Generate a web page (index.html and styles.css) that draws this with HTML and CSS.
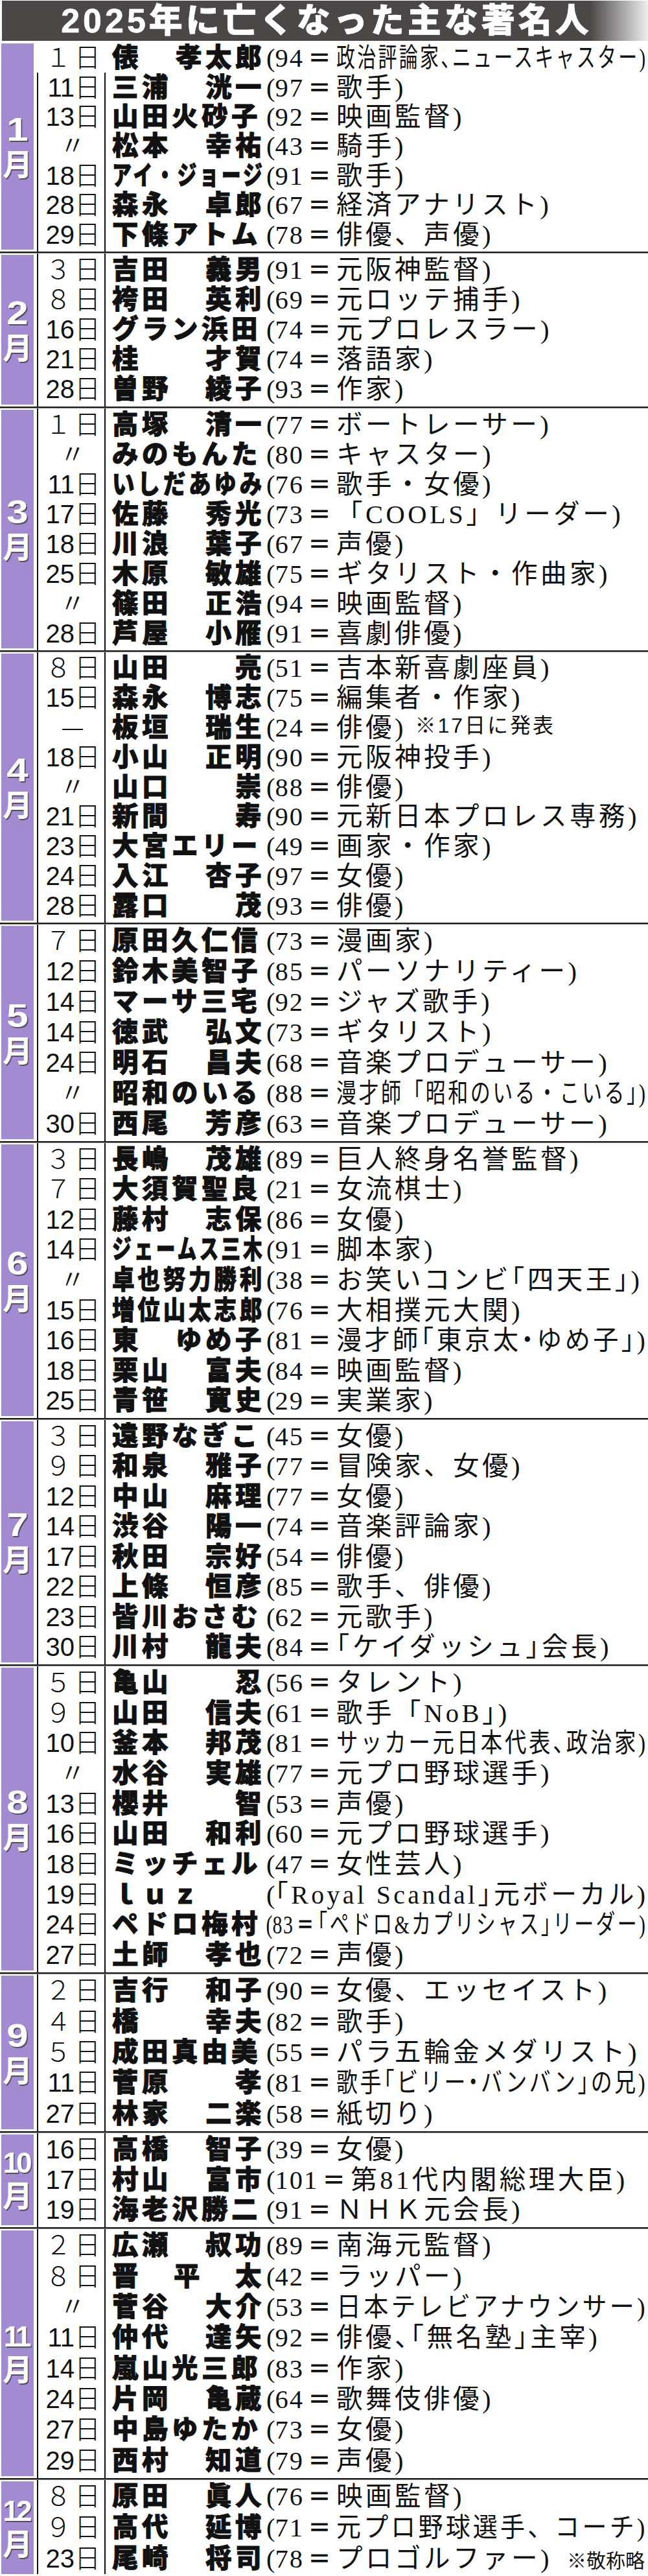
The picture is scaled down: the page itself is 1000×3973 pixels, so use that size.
FILE: index.html
```html
<!DOCTYPE html>
<html lang="ja">
<head>
<meta charset="utf-8">
<title>2025年に亡くなった主な著名人</title>
<link rel="stylesheet" href="styles.css">
<script src="script.js" defer></script>
</head>
<body>
<div class="title"><h1>2025年に亡くなった主な著名人</h1></div>
<div class="table">

<section class="sec m1">
  <div class="month"><span class="mn">1</span><span class="mg">月</span></div>
  <div class="rows">
    <div class="row first"><div class="date"><span class="dn fw">１</span>日</div><div class="name sp"><span>俵</span><span>孝太郎</span></div><div class="rest"><span class="pl">(</span><span class="age">94</span><span class="eq">＝</span><span class="desc fit halt">政治評論家、ニュースキャスター<span class="pr">)</span></span></div></div>
    <div class="row"><div class="date"><span class="dn">11</span>日</div><div class="name sp"><span>三浦</span><span>洸一</span></div><div class="rest"><span class="pl">(</span><span class="age">97</span><span class="eq">＝</span><span class="desc fit">歌手<span class="pr">)</span></span></div></div>
    <div class="row"><div class="date"><span class="dn">13</span>日</div><div class="name"><span class="nm">山田火砂子</span></div><div class="rest"><span class="pl">(</span><span class="age">92</span><span class="eq">＝</span><span class="desc fit">映画監督<span class="pr">)</span></span></div></div>
    <div class="row"><div class="date c"><span class="dit">〃</span></div><div class="name sp"><span>松本</span><span>幸祐</span></div><div class="rest"><span class="pl">(</span><span class="age">43</span><span class="eq">＝</span><span class="desc fit">騎手<span class="pr">)</span></span></div></div>
    <div class="row"><div class="date"><span class="dn">18</span>日</div><div class="name"><span class="nm">アイ・ジョージ</span></div><div class="rest"><span class="pl">(</span><span class="age">91</span><span class="eq">＝</span><span class="desc fit">歌手<span class="pr">)</span></span></div></div>
    <div class="row"><div class="date"><span class="dn">28</span>日</div><div class="name sp"><span>森永</span><span>卓郎</span></div><div class="rest"><span class="pl">(</span><span class="age">67</span><span class="eq">＝</span><span class="desc fit">経済アナリスト<span class="pr">)</span></span></div></div>
    <div class="row"><div class="date"><span class="dn">29</span>日</div><div class="name"><span class="nm">下條アトム</span></div><div class="rest"><span class="pl">(</span><span class="age">78</span><span class="eq">＝</span><span class="desc fit">俳優、声優<span class="pr">)</span></span></div></div>
  </div>
</section>
<div class="sep"></div>

<section class="sec m2">
  <div class="month"><span class="mn">2</span><span class="mg">月</span></div>
  <div class="rows">
    <div class="row"><div class="date"><span class="dn fw">３</span>日</div><div class="name sp"><span>吉田</span><span>義男</span></div><div class="rest"><span class="pl">(</span><span class="age">91</span><span class="eq">＝</span><span class="desc fit">元阪神監督<span class="pr">)</span></span></div></div>
    <div class="row"><div class="date"><span class="dn fw">８</span>日</div><div class="name sp"><span>袴田</span><span>英利</span></div><div class="rest"><span class="pl">(</span><span class="age">69</span><span class="eq">＝</span><span class="desc fit">元ロッテ捕手<span class="pr">)</span></span></div></div>
    <div class="row"><div class="date"><span class="dn">16</span>日</div><div class="name"><span class="nm">グラン浜田</span></div><div class="rest"><span class="pl">(</span><span class="age">74</span><span class="eq">＝</span><span class="desc fit">元プロレスラー<span class="pr">)</span></span></div></div>
    <div class="row"><div class="date"><span class="dn">21</span>日</div><div class="name sp"><span>桂</span><span>才賀</span></div><div class="rest"><span class="pl">(</span><span class="age">74</span><span class="eq">＝</span><span class="desc fit">落語家<span class="pr">)</span></span></div></div>
    <div class="row"><div class="date"><span class="dn">28</span>日</div><div class="name sp"><span>曽野</span><span>綾子</span></div><div class="rest"><span class="pl">(</span><span class="age">93</span><span class="eq">＝</span><span class="desc fit">作家<span class="pr">)</span></span></div></div>
  </div>
</section>
<div class="sep"></div>

<section class="sec m3">
  <div class="month"><span class="mn">3</span><span class="mg">月</span></div>
  <div class="rows">
    <div class="row"><div class="date"><span class="dn fw">１</span>日</div><div class="name sp"><span>高塚</span><span>清一</span></div><div class="rest"><span class="pl">(</span><span class="age">77</span><span class="eq">＝</span><span class="desc fit">ボートレーサー<span class="pr">)</span></span></div></div>
    <div class="row"><div class="date c"><span class="dit">〃</span></div><div class="name"><span class="nm">みのもんた</span></div><div class="rest"><span class="pl">(</span><span class="age">80</span><span class="eq">＝</span><span class="desc fit">キャスター<span class="pr">)</span></span></div></div>
    <div class="row"><div class="date"><span class="dn">11</span>日</div><div class="name"><span class="nm">いしだあゆみ</span></div><div class="rest"><span class="pl">(</span><span class="age">76</span><span class="eq">＝</span><span class="desc fit">歌手・女優<span class="pr">)</span></span></div></div>
    <div class="row"><div class="date"><span class="dn">17</span>日</div><div class="name sp"><span>佐藤</span><span>秀光</span></div><div class="rest"><span class="pl">(</span><span class="age">73</span><span class="eq">＝</span><span class="desc fit">「<span class="lt">COOLS</span>」リーダー<span class="pr">)</span></span></div></div>
    <div class="row"><div class="date"><span class="dn">18</span>日</div><div class="name sp"><span>川浪</span><span>葉子</span></div><div class="rest"><span class="pl">(</span><span class="age">67</span><span class="eq">＝</span><span class="desc fit">声優<span class="pr">)</span></span></div></div>
    <div class="row"><div class="date"><span class="dn">25</span>日</div><div class="name sp"><span>木原</span><span>敏雄</span></div><div class="rest"><span class="pl">(</span><span class="age">75</span><span class="eq">＝</span><span class="desc fit">ギタリスト・作曲家<span class="pr">)</span></span></div></div>
    <div class="row"><div class="date c"><span class="dit">〃</span></div><div class="name sp"><span>篠田</span><span>正浩</span></div><div class="rest"><span class="pl">(</span><span class="age">94</span><span class="eq">＝</span><span class="desc fit">映画監督<span class="pr">)</span></span></div></div>
    <div class="row"><div class="date"><span class="dn">28</span>日</div><div class="name sp"><span>芦屋</span><span>小雁</span></div><div class="rest"><span class="pl">(</span><span class="age">91</span><span class="eq">＝</span><span class="desc fit">喜劇俳優<span class="pr">)</span></span></div></div>
  </div>
</section>
<div class="sep"></div>

<section class="sec m4">
  <div class="month"><span class="mn">4</span><span class="mg">月</span></div>
  <div class="rows">
    <div class="row"><div class="date"><span class="dn fw">８</span>日</div><div class="name sp"><span>山田</span><span>亮</span></div><div class="rest"><span class="pl">(</span><span class="age">51</span><span class="eq">＝</span><span class="desc fit">吉本新喜劇座員<span class="pr">)</span></span></div></div>
    <div class="row"><div class="date"><span class="dn">15</span>日</div><div class="name sp"><span>森永</span><span>博志</span></div><div class="rest"><span class="pl">(</span><span class="age">75</span><span class="eq">＝</span><span class="desc fit">編集者・作家<span class="pr">)</span></span></div></div>
    <div class="row"><div class="date c"><span class="dash">―</span></div><div class="name sp"><span>板垣</span><span>瑞生</span></div><div class="rest"><span class="pl">(</span><span class="age">24</span><span class="eq">＝</span><span class="desc fit">俳優<span class="pr">)</span></span><span class="note">※17日に発表</span></div></div>
    <div class="row"><div class="date"><span class="dn">18</span>日</div><div class="name sp"><span>小山</span><span>正明</span></div><div class="rest"><span class="pl">(</span><span class="age">90</span><span class="eq">＝</span><span class="desc fit">元阪神投手<span class="pr">)</span></span></div></div>
    <div class="row"><div class="date c"><span class="dit">〃</span></div><div class="name sp"><span>山口</span><span>崇</span></div><div class="rest"><span class="pl">(</span><span class="age">88</span><span class="eq">＝</span><span class="desc fit">俳優<span class="pr">)</span></span></div></div>
    <div class="row"><div class="date"><span class="dn">21</span>日</div><div class="name sp"><span>新間</span><span>寿</span></div><div class="rest"><span class="pl">(</span><span class="age">90</span><span class="eq">＝</span><span class="desc fit">元新日本プロレス専務<span class="pr">)</span></span></div></div>
    <div class="row"><div class="date"><span class="dn">23</span>日</div><div class="name"><span class="nm">大宮エリー</span></div><div class="rest"><span class="pl">(</span><span class="age">49</span><span class="eq">＝</span><span class="desc fit">画家・作家<span class="pr">)</span></span></div></div>
    <div class="row"><div class="date"><span class="dn">24</span>日</div><div class="name sp"><span>入江</span><span>杏子</span></div><div class="rest"><span class="pl">(</span><span class="age">97</span><span class="eq">＝</span><span class="desc fit">女優<span class="pr">)</span></span></div></div>
    <div class="row"><div class="date"><span class="dn">28</span>日</div><div class="name sp"><span>露口</span><span>茂</span></div><div class="rest"><span class="pl">(</span><span class="age">93</span><span class="eq">＝</span><span class="desc fit">俳優<span class="pr">)</span></span></div></div>
  </div>
</section>
<div class="sep"></div>

<section class="sec m5">
  <div class="month"><span class="mn">5</span><span class="mg">月</span></div>
  <div class="rows">
    <div class="row"><div class="date"><span class="dn fw">７</span>日</div><div class="name"><span class="nm">原田久仁信</span></div><div class="rest"><span class="pl">(</span><span class="age">73</span><span class="eq">＝</span><span class="desc fit">漫画家<span class="pr">)</span></span></div></div>
    <div class="row"><div class="date"><span class="dn">12</span>日</div><div class="name"><span class="nm">鈴木美智子</span></div><div class="rest"><span class="pl">(</span><span class="age">85</span><span class="eq">＝</span><span class="desc fit">パーソナリティー<span class="pr">)</span></span></div></div>
    <div class="row"><div class="date"><span class="dn">14</span>日</div><div class="name"><span class="nm">マーサ三宅</span></div><div class="rest"><span class="pl">(</span><span class="age">92</span><span class="eq">＝</span><span class="desc fit">ジャズ歌手<span class="pr">)</span></span></div></div>
    <div class="row"><div class="date"><span class="dn">14</span>日</div><div class="name sp"><span>徳武</span><span>弘文</span></div><div class="rest"><span class="pl">(</span><span class="age">73</span><span class="eq">＝</span><span class="desc fit">ギタリスト<span class="pr">)</span></span></div></div>
    <div class="row"><div class="date"><span class="dn">24</span>日</div><div class="name sp"><span>明石</span><span>昌夫</span></div><div class="rest"><span class="pl">(</span><span class="age">68</span><span class="eq">＝</span><span class="desc fit">音楽プロデューサー<span class="pr">)</span></span></div></div>
    <div class="row"><div class="date c"><span class="dit">〃</span></div><div class="name"><span class="nm">昭和のいる</span></div><div class="rest"><span class="pl">(</span><span class="age">88</span><span class="eq">＝</span><span class="desc fit">漫才師「昭和のいる・こいる」<span class="pr">)</span></span></div></div>
    <div class="row"><div class="date"><span class="dn">30</span>日</div><div class="name sp"><span>西尾</span><span>芳彦</span></div><div class="rest"><span class="pl">(</span><span class="age">63</span><span class="eq">＝</span><span class="desc fit">音楽プロデューサー<span class="pr">)</span></span></div></div>
  </div>
</section>
<div class="sep"></div>

<section class="sec m6">
  <div class="month"><span class="mn">6</span><span class="mg">月</span></div>
  <div class="rows">
    <div class="row"><div class="date"><span class="dn fw">３</span>日</div><div class="name sp"><span>長嶋</span><span>茂雄</span></div><div class="rest"><span class="pl">(</span><span class="age">89</span><span class="eq">＝</span><span class="desc fit">巨人終身名誉監督<span class="pr">)</span></span></div></div>
    <div class="row"><div class="date"><span class="dn fw">７</span>日</div><div class="name"><span class="nm">大須賀聖良</span></div><div class="rest"><span class="pl">(</span><span class="age">21</span><span class="eq">＝</span><span class="desc fit">女流棋士<span class="pr">)</span></span></div></div>
    <div class="row"><div class="date"><span class="dn">12</span>日</div><div class="name sp"><span>藤村</span><span>志保</span></div><div class="rest"><span class="pl">(</span><span class="age">86</span><span class="eq">＝</span><span class="desc fit">女優<span class="pr">)</span></span></div></div>
    <div class="row"><div class="date"><span class="dn">14</span>日</div><div class="name"><span class="nm">ジェームス三木</span></div><div class="rest"><span class="pl">(</span><span class="age">91</span><span class="eq">＝</span><span class="desc fit">脚本家<span class="pr">)</span></span></div></div>
    <div class="row"><div class="date c"><span class="dit">〃</span></div><div class="name"><span class="nm">卓也努力勝利</span></div><div class="rest"><span class="pl">(</span><span class="age">38</span><span class="eq">＝</span><span class="desc fit halt">お笑いコンビ「四天王」<span class="pr">)</span></span></div></div>
    <div class="row"><div class="date"><span class="dn">15</span>日</div><div class="name"><span class="nm">増位山太志郎</span></div><div class="rest"><span class="pl">(</span><span class="age">76</span><span class="eq">＝</span><span class="desc fit">大相撲元大関<span class="pr">)</span></span></div></div>
    <div class="row"><div class="date"><span class="dn">16</span>日</div><div class="name sp"><span>東</span><span>ゆめ子</span></div><div class="rest"><span class="pl">(</span><span class="age">81</span><span class="eq">＝</span><span class="desc fit halt">漫才師「東京太・ゆめ子」<span class="pr">)</span></span></div></div>
    <div class="row"><div class="date"><span class="dn">18</span>日</div><div class="name sp"><span>栗山</span><span>富夫</span></div><div class="rest"><span class="pl">(</span><span class="age">84</span><span class="eq">＝</span><span class="desc fit">映画監督<span class="pr">)</span></span></div></div>
    <div class="row"><div class="date"><span class="dn">25</span>日</div><div class="name sp"><span>青笹</span><span>寛史</span></div><div class="rest"><span class="pl">(</span><span class="age">29</span><span class="eq">＝</span><span class="desc fit">実業家<span class="pr">)</span></span></div></div>
  </div>
</section>
<div class="sep"></div>

<section class="sec m7">
  <div class="month"><span class="mn">7</span><span class="mg">月</span></div>
  <div class="rows">
    <div class="row"><div class="date"><span class="dn fw">３</span>日</div><div class="name"><span class="nm">遠野なぎこ</span></div><div class="rest"><span class="pl">(</span><span class="age">45</span><span class="eq">＝</span><span class="desc fit">女優<span class="pr">)</span></span></div></div>
    <div class="row"><div class="date"><span class="dn fw">９</span>日</div><div class="name sp"><span>和泉</span><span>雅子</span></div><div class="rest"><span class="pl">(</span><span class="age">77</span><span class="eq">＝</span><span class="desc fit">冒険家、女優<span class="pr">)</span></span></div></div>
    <div class="row"><div class="date"><span class="dn">12</span>日</div><div class="name sp"><span>中山</span><span>麻理</span></div><div class="rest"><span class="pl">(</span><span class="age">77</span><span class="eq">＝</span><span class="desc fit">女優<span class="pr">)</span></span></div></div>
    <div class="row"><div class="date"><span class="dn">14</span>日</div><div class="name sp"><span>渋谷</span><span>陽一</span></div><div class="rest"><span class="pl">(</span><span class="age">74</span><span class="eq">＝</span><span class="desc fit">音楽評論家<span class="pr">)</span></span></div></div>
    <div class="row"><div class="date"><span class="dn">17</span>日</div><div class="name sp"><span>秋田</span><span>宗好</span></div><div class="rest"><span class="pl">(</span><span class="age">54</span><span class="eq">＝</span><span class="desc fit">俳優<span class="pr">)</span></span></div></div>
    <div class="row"><div class="date"><span class="dn">22</span>日</div><div class="name sp"><span>上條</span><span>恒彦</span></div><div class="rest"><span class="pl">(</span><span class="age">85</span><span class="eq">＝</span><span class="desc fit">歌手、俳優<span class="pr">)</span></span></div></div>
    <div class="row"><div class="date"><span class="dn">23</span>日</div><div class="name"><span class="nm">皆川おさむ</span></div><div class="rest"><span class="pl">(</span><span class="age">62</span><span class="eq">＝</span><span class="desc fit">元歌手<span class="pr">)</span></span></div></div>
    <div class="row"><div class="date"><span class="dn">30</span>日</div><div class="name sp"><span>川村</span><span>龍夫</span></div><div class="rest"><span class="pl">(</span><span class="age">84</span><span class="eq">＝</span><span class="desc fit halt">「ケイダッシュ」会長<span class="pr">)</span></span></div></div>
  </div>
</section>
<div class="sep"></div>

<section class="sec m8">
  <div class="month"><span class="mn">8</span><span class="mg">月</span></div>
  <div class="rows">
    <div class="row"><div class="date"><span class="dn fw">５</span>日</div><div class="name sp"><span>亀山</span><span>忍</span></div><div class="rest"><span class="pl">(</span><span class="age">56</span><span class="eq">＝</span><span class="desc fit">タレント<span class="pr">)</span></span></div></div>
    <div class="row"><div class="date"><span class="dn fw">９</span>日</div><div class="name sp"><span>山田</span><span>信夫</span></div><div class="rest"><span class="pl">(</span><span class="age">61</span><span class="eq">＝</span><span class="desc fit">歌手「<span class="lt">NoB</span>」<span class="pr">)</span></span></div></div>
    <div class="row"><div class="date"><span class="dn">10</span>日</div><div class="name sp"><span>釜本</span><span>邦茂</span></div><div class="rest"><span class="pl">(</span><span class="age">81</span><span class="eq">＝</span><span class="desc fit halt">サッカー元日本代表、政治家<span class="pr">)</span></span></div></div>
    <div class="row"><div class="date c"><span class="dit">〃</span></div><div class="name sp"><span>水谷</span><span>実雄</span></div><div class="rest"><span class="pl">(</span><span class="age">77</span><span class="eq">＝</span><span class="desc fit">元プロ野球選手<span class="pr">)</span></span></div></div>
    <div class="row"><div class="date"><span class="dn">13</span>日</div><div class="name sp"><span>櫻井</span><span>智</span></div><div class="rest"><span class="pl">(</span><span class="age">53</span><span class="eq">＝</span><span class="desc fit">声優<span class="pr">)</span></span></div></div>
    <div class="row"><div class="date"><span class="dn">16</span>日</div><div class="name sp"><span>山田</span><span>和利</span></div><div class="rest"><span class="pl">(</span><span class="age">60</span><span class="eq">＝</span><span class="desc fit">元プロ野球選手<span class="pr">)</span></span></div></div>
    <div class="row"><div class="date"><span class="dn">18</span>日</div><div class="name"><span class="nm">ミッチェル</span></div><div class="rest"><span class="pl">(</span><span class="age">47</span><span class="eq">＝</span><span class="desc fit">女性芸人<span class="pr">)</span></span></div></div>
    <div class="row"><div class="date"><span class="dn">19</span>日</div><div class="name"><span class="nm">ｌｕｚ</span></div><div class="rest"><span class="pl">(</span><span class="desc fit halt">「<span class="lt">Royal Scandal</span>」元ボーカル<span class="pr">)</span></span></div></div>
    <div class="row"><div class="date"><span class="dn">24</span>日</div><div class="name"><span class="nm">ペドロ梅村</span></div><div class="rest"><span class="grp fit"><span class="pl">(</span><span class="age">83</span><span class="eq">＝</span><span class="halt">「ペドロ&amp;カプリシャス」リーダー</span><span class="pr">)</span></span></div></div>
    <div class="row"><div class="date"><span class="dn">27</span>日</div><div class="name sp"><span>土師</span><span>孝也</span></div><div class="rest"><span class="pl">(</span><span class="age">72</span><span class="eq">＝</span><span class="desc fit">声優<span class="pr">)</span></span></div></div>
  </div>
</section>
<div class="sep"></div>

<section class="sec m9">
  <div class="month"><span class="mn">9</span><span class="mg">月</span></div>
  <div class="rows">
    <div class="row"><div class="date"><span class="dn fw">２</span>日</div><div class="name sp"><span>吉行</span><span>和子</span></div><div class="rest"><span class="pl">(</span><span class="age">90</span><span class="eq">＝</span><span class="desc fit">女優、エッセイスト<span class="pr">)</span></span></div></div>
    <div class="row"><div class="date"><span class="dn fw">４</span>日</div><div class="name sp"><span>橋</span><span>幸夫</span></div><div class="rest"><span class="pl">(</span><span class="age">82</span><span class="eq">＝</span><span class="desc fit">歌手<span class="pr">)</span></span></div></div>
    <div class="row"><div class="date"><span class="dn fw">５</span>日</div><div class="name"><span class="nm">成田真由美</span></div><div class="rest"><span class="pl">(</span><span class="age">55</span><span class="eq">＝</span><span class="desc fit">パラ五輪金メダリスト<span class="pr">)</span></span></div></div>
    <div class="row"><div class="date"><span class="dn">11</span>日</div><div class="name sp"><span>菅原</span><span>孝</span></div><div class="rest"><span class="pl">(</span><span class="age">81</span><span class="eq">＝</span><span class="desc fit halt">歌手「ビリー・バンバン」の兄<span class="pr">)</span></span></div></div>
    <div class="row"><div class="date"><span class="dn">27</span>日</div><div class="name sp"><span>林家</span><span>二楽</span></div><div class="rest"><span class="pl">(</span><span class="age">58</span><span class="eq">＝</span><span class="desc fit">紙切り<span class="pr">)</span></span></div></div>
  </div>
</section>
<div class="sep"></div>

<section class="sec m10">
  <div class="month"><span class="mn two">10</span><span class="mg">月</span></div>
  <div class="rows">
    <div class="row"><div class="date"><span class="dn">16</span>日</div><div class="name sp"><span>高橋</span><span>智子</span></div><div class="rest"><span class="pl">(</span><span class="age">39</span><span class="eq">＝</span><span class="desc fit">女優<span class="pr">)</span></span></div></div>
    <div class="row"><div class="date"><span class="dn">17</span>日</div><div class="name sp"><span>村山</span><span>富市</span></div><div class="rest"><span class="pl">(</span><span class="age">101</span><span class="eq">＝</span><span class="desc fit">第81代内閣総理大臣<span class="pr">)</span></span></div></div>
    <div class="row"><div class="date"><span class="dn">19</span>日</div><div class="name"><span class="nm">海老沢勝二</span></div><div class="rest"><span class="pl">(</span><span class="age">91</span><span class="eq">＝</span><span class="desc fit">ＮＨＫ元会長<span class="pr">)</span></span></div></div>
  </div>
</section>
<div class="sep"></div>

<section class="sec m11">
  <div class="month"><span class="mn two">11</span><span class="mg">月</span></div>
  <div class="rows">
    <div class="row"><div class="date"><span class="dn fw">２</span>日</div><div class="name sp"><span>広瀬</span><span>叔功</span></div><div class="rest"><span class="pl">(</span><span class="age">89</span><span class="eq">＝</span><span class="desc fit">南海元監督<span class="pr">)</span></span></div></div>
    <div class="row"><div class="date"><span class="dn fw">８</span>日</div><div class="name sp"><span>晋</span><span>平</span><span>太</span></div><div class="rest"><span class="pl">(</span><span class="age">42</span><span class="eq">＝</span><span class="desc fit">ラッパー<span class="pr">)</span></span></div></div>
    <div class="row"><div class="date c"><span class="dit">〃</span></div><div class="name sp"><span>菅谷</span><span>大介</span></div><div class="rest"><span class="pl">(</span><span class="age">53</span><span class="eq">＝</span><span class="desc fit">日本テレビアナウンサー<span class="pr">)</span></span></div></div>
    <div class="row"><div class="date"><span class="dn">11</span>日</div><div class="name sp"><span>仲代</span><span>達矢</span></div><div class="rest"><span class="pl">(</span><span class="age">92</span><span class="eq">＝</span><span class="desc fit halt">俳優、「無名塾」主宰<span class="pr">)</span></span></div></div>
    <div class="row"><div class="date"><span class="dn">14</span>日</div><div class="name"><span class="nm">嵐山光三郎</span></div><div class="rest"><span class="pl">(</span><span class="age">83</span><span class="eq">＝</span><span class="desc fit">作家<span class="pr">)</span></span></div></div>
    <div class="row"><div class="date"><span class="dn">24</span>日</div><div class="name sp"><span>片岡</span><span>亀蔵</span></div><div class="rest"><span class="pl">(</span><span class="age">64</span><span class="eq">＝</span><span class="desc fit">歌舞伎俳優<span class="pr">)</span></span></div></div>
    <div class="row"><div class="date"><span class="dn">27</span>日</div><div class="name"><span class="nm">中島ゆたか</span></div><div class="rest"><span class="pl">(</span><span class="age">73</span><span class="eq">＝</span><span class="desc fit">女優<span class="pr">)</span></span></div></div>
    <div class="row"><div class="date"><span class="dn">29</span>日</div><div class="name sp"><span>西村</span><span>知道</span></div><div class="rest"><span class="pl">(</span><span class="age">79</span><span class="eq">＝</span><span class="desc fit">声優<span class="pr">)</span></span></div></div>
  </div>
</section>
<div class="sep"></div>

<section class="sec m12">
  <div class="month"><span class="mn two">12</span><span class="mg">月</span></div>
  <div class="rows">
    <div class="row"><div class="date"><span class="dn fw">８</span>日</div><div class="name sp"><span>原田</span><span>眞人</span></div><div class="rest"><span class="pl">(</span><span class="age">76</span><span class="eq">＝</span><span class="desc fit">映画監督<span class="pr">)</span></span></div></div>
    <div class="row"><div class="date"><span class="dn fw">９</span>日</div><div class="name sp"><span>高代</span><span>延博</span></div><div class="rest"><span class="pl">(</span><span class="age">71</span><span class="eq">＝</span><span class="desc fit">元プロ野球選手、コーチ<span class="pr">)</span></span></div></div>
    <div class="row"><div class="date"><span class="dn">23</span>日</div><div class="name sp"><span>尾崎</span><span>将司</span></div><div class="rest"><span class="pl">(</span><span class="age">78</span><span class="eq">＝</span><span class="desc fit">プロゴルファー<span class="pr">)</span></span></div><span class="ack">※敬称略</span></div>
  </div>
</section>

</div>
</body>
</html>
```

FILE: styles.css
```css
* { box-sizing: border-box; margin: 0; padding: 0; }
html { overflow: hidden; background: #fff; }
body {
  width: 1000px;
  font-family: "Noto Sans CJK JP", "Noto Sans CJK SC", sans-serif;
  color: #111;
}

/* title bar */
.title {
  margin: 1px 0 0 3px;
  height: 62px;
  background: linear-gradient(90deg, #4b4747 0, #4b4747 91%, #efefef 100%);
  display: flex;
  align-items: center;
  justify-content: center;
}
.title h1 {
  font-family: "Liberation Sans", "Noto Sans CJK JP", sans-serif;
  font-size: 52px;
  font-weight: 900;
  color: #fff;
  letter-spacing: 5px;
  line-height: 58px;
  padding-left: 5px;
  -webkit-text-stroke: 0.6px #fff;
}

/* table with the two vertical rules */
.table {
  margin-top: 4px;
  background:
    linear-gradient(#111, #111) 57px 0 / 2px 100% no-repeat,
    linear-gradient(#111, #111) 161px 0 / 2px 100% no-repeat;
}
.sec { display: flex; }
.m1 { height: 318px; }
.m2 { height: 231px; }
.m3 { height: 368px; }
.m4 { height: 412px; }
.m5 { height: 329px; }
.m6 { height: 419px; }
.m7 { height: 372px; }
.m8 { height: 467px; }
.m9 { height: 237px; }
.m10 { height: 140px; }
.m11 { height: 379px; }
.m12 { height: 143px; }

.sep {
  height: 8px;
  background: linear-gradient(to bottom, transparent 0 3px, #1c1c1c 3px 5px, #8a8a8a 5px 6px, transparent 6px);
}

/* month label */
.month {
  flex: none;
  width: 50px;
  margin-left: 2px;
  background: #a38bd1;
  display: flex;
  flex-direction: column;
  align-items: center;
  justify-content: center;
  font-family: "Liberation Sans", "Noto Sans CJK JP", sans-serif;
  color: #fff;
  font-weight: 700;
  text-shadow: 1.5px 1.5px 0 #574d6b;
}
.mn {
  display: block;
  font-size: 50px;
  line-height: 56px;
  transform: scaleX(1.2);
}
.mn.two {
  font-size: 44px;
  line-height: 50px;
  letter-spacing: -4px;
  text-indent: -4px;
  transform: none;
}
.mg {
  display: block;
  font-size: 46px;
  line-height: 52px;
}

/* rows */
.rows {
  flex: 1;
  min-width: 0;
  margin-left: 5px;
  display: flex;
  flex-direction: column;
}
.row {
  flex: 1 1 0;
  min-height: 0;
  display: flex;
  align-items: center;
  white-space: nowrap;
}
.row.first { background: #fff; }

.date {
  flex: none;
  width: 106px;
  padding-right: 8px;
  display: flex;
  justify-content: flex-end;
  align-items: baseline;
  font-family: "Liberation Sans", "Noto Sans CJK JP", sans-serif;
  font-size: 40px;
  font-weight: 300;
  line-height: 45px;
}
.date.c { justify-content: center; padding-right: 0; padding-left: 4px; }
.dn { display: inline-block; }
.dn.fw { margin-right: 5px; }
.dit { -webkit-text-stroke: 0.5px #111; }
.dash { font-size: 32px; }

.name {
  flex: none;
  width: 246px;
  padding-left: 10px;
  display: flex;
  overflow-x: clip;
  font-family: "Liberation Serif", "Noto Sans CJK JP", sans-serif;
  font-size: 40.5px;
  font-weight: 900;
  letter-spacing: 5.5px;
  line-height: 45px;
  -webkit-text-stroke: 0.9px #111;
}
.name.sp { justify-content: space-between; }
.nm { flex: none; display: inline-block; transform-origin: 0 50%; }

.rest {
  flex: 1 1 0;
  min-width: 0;
  overflow-x: clip;
  font-family: "Liberation Serif", "Noto Sans CJK JP", sans-serif;
  font-size: 40.5px;
  font-weight: 400;
  letter-spacing: 4.5px;
  line-height: 45px;
}
.pl, .pr { letter-spacing: 0; line-height: 30px; }
.pl { margin-left: 2px; }
.age { letter-spacing: 2px; line-height: 30px; }
.eq {
  display: inline-block;
  font-size: 36px;
  font-weight: 700;
  letter-spacing: 0;
  line-height: 30px;
  margin: 0 8px 0 6px;
}
.desc, .grp { display: inline-block; transform-origin: 0 50%; }
.halt { font-feature-settings: "halt"; }
.note {
  font-family: "Liberation Sans", "Noto Sans CJK JP", sans-serif;
  font-size: 32px;
  letter-spacing: 3px;
  line-height: 30px;
  margin-left: 18px;
  vertical-align: 6px;
}
.ack {
  flex: none;
  align-self: flex-end;
  font-family: "Liberation Sans", "Noto Sans CJK JP", sans-serif;
  font-size: 30px;
  line-height: 34px;
  margin: 0 5px 3px 0;
}
```

FILE: script.js
```js
(function () {
  var LIMIT = 996;
  var NAME_W = 236;
  function squeeze(el, avail) {
    el.style.transform = '';
    var w = el.offsetWidth;
    if (w > avail && w > 0) {
      el.style.transform = 'scaleX(' + (avail / w).toFixed(4) + ')';
    }
  }
  function fit() {
    document.querySelectorAll('.nm').forEach(function (el) {
      squeeze(el, NAME_W);
    });
    document.querySelectorAll('.fit').forEach(function (el) {
      el.style.transform = '';
      var left = el.getBoundingClientRect().left;
      squeeze(el, LIMIT - left);
    });
  }
  if (document.readyState === 'complete') { fit(); }
  else { window.addEventListener('load', fit); }
})();
```
